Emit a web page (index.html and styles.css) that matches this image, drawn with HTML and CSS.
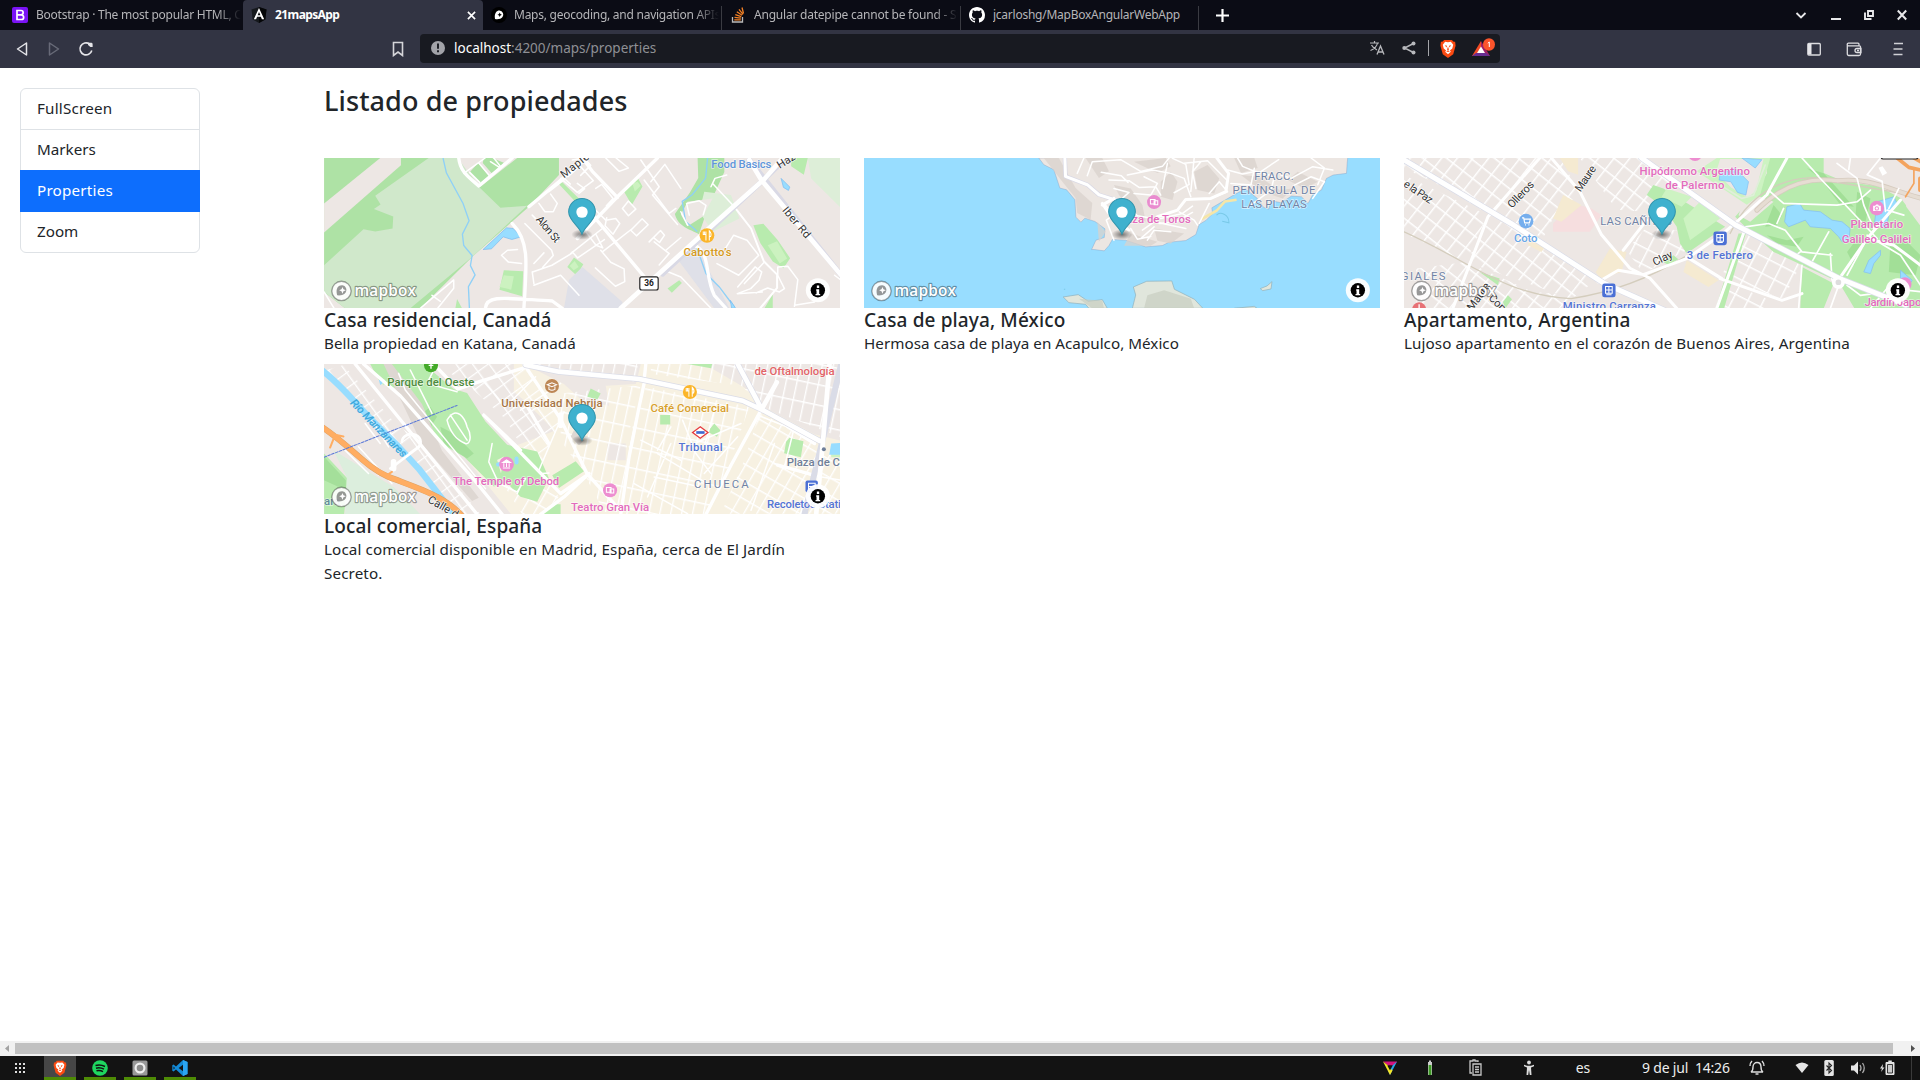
FILE: index.html
```html
<!DOCTYPE html>
<html lang="es">
<head>
<meta charset="utf-8">
<title>21mapsApp</title>
<link rel="stylesheet" href="styles.css">
</head>
<body>
<svg class="defs" width="0" height="0" aria-hidden="true">
  <defs>
    <radialGradient id="shade"><stop offset="0" stop-opacity=".5"/><stop offset="1" stop-opacity="0"/></radialGradient>
    <symbol id="overlay" viewBox="0 0 1544 449">
      <ellipse cx="772" cy="229" rx="32" ry="16" fill="url(#shade)"/>
      <path d="M772 228C764 203 732 188 732 161A40 40 0 0 1 812 161C812 188 780 203 772 228Z" fill="#3fb1ce" stroke="#3295ad" stroke-width="3"/>
      <circle cx="772" cy="162" r="17" fill="#fff"/>
      <circle cx="52" cy="398" r="29" fill="#fff" fill-opacity=".9" stroke="#000" stroke-opacity=".35" stroke-width="4"/>
      <path d="M39 411C33 388 44 380 55 381A14 14 0 0 1 65 402C60 410 50 412 39 411Z" fill="#000" fill-opacity=".4"/>
      <path d="M55 386l3 7 7 3-7 3-3 7-3-7-7-3 7-3z" fill="#fff"/>
      <text class="logo" x="91" y="412" textLength="184">mapbox</text>
      <circle cx="1478" cy="396" r="36" fill="#fff" fill-opacity=".93"/>
      <circle cx="1478" cy="396" r="21.500"/>
      <path d="M1475 382h7v7h-7zM1473 393h9v14h3v4h-14v-4h3v-10h-1z" fill="#fff"/>
    </symbol>
    <symbol id="lion" viewBox="0 0 16 20">
      <path d="M4 1h8l2 2 1.500 0 .5 4-2.500 9L8 20l-5.500-4L0 7l.5-4L2 3z" fill="#fb4a12"/>
      <path d="M8 3.500l3-.5 2.500 3-1 4-2.500 2 1 1.500L8 16l-3-2.500L6 12l-2.500-2-1-4L5 3z" fill="#fff"/>
      <path d="M4.500 6.500l2.500.5-.5 2zM11.500 6.500L9 7l.5 2zM8 8l1 3-1 1-1-1zM6 13l2-.8 2 .8-2 .6z" fill="#fb4a12"/>
    </symbol>
    <pattern id="p3" width="37" height="44" patternUnits="userSpaceOnUse" patternTransform="rotate(38)"><path d="M0 2H37M2 0V44" stroke="#fff" stroke-width="4.500"/></pattern>
    <pattern id="p3b" width="42" height="46" patternUnits="userSpaceOnUse" patternTransform="rotate(27)"><path d="M0 2H42M2 0V46" stroke="#fff" stroke-width="4.500"/></pattern>
    <pattern id="p4" width="32" height="60" patternUnits="userSpaceOnUse" patternTransform="rotate(12)"><path d="M0 2H32M2 0V60" stroke="#fff" stroke-width="4"/></pattern>
    <pattern id="p4b" width="34" height="46" patternUnits="userSpaceOnUse" patternTransform="rotate(30)"><path d="M0 2H34M2 0V46" stroke="#fff" stroke-width="4"/></pattern>
    <pattern id="p4c" width="40" height="38" patternUnits="userSpaceOnUse" patternTransform="rotate(-36)"><path d="M0 2H40M2 0V38" stroke="#fff" stroke-width="4"/></pattern>
  </defs>
</svg>

<div class="window">
  <header class="tabs">
    <div class="tab">
      <svg class="fav" viewBox="0 0 16 16"><rect width="16" height="16" rx="2" fill="#7a13f5"/><path d="M5 3.500h4a2 2 0 0 1 0 4.300H5zM5 7.800h4.300a2.300 2.300 0 0 1 0 4.700H5z" fill="none" stroke="#fff" stroke-width="1.700"/></svg>
      <span class="tab-title t1">Bootstrap · The most popular HTML, C</span>
    </div>
    <div class="tab active">
      <svg class="fav" viewBox="0 0 16 16"><path d="M8 0l7.500 2.600-1.200 10L8 16l-6.300-3.400-1.200-10z" fill="#15181c"/><path d="M8 0l7.500 2.600-1.200 10L8 16z" fill="#050608"/><path d="M8 1L2.800 12.300h2.300l1-2.500h3.800l1 2.500h2.300zM8 5l1.400 3.300H6.600z" fill="#fff" fill-rule="evenodd"/></svg>
      <span class="tab-title t2">21mapsApp</span>
      <svg class="close" viewBox="0 0 10 10"><path d="M1 1l8 8M9 1L1 9" stroke="#fff" stroke-width="1.800"/></svg>
    </div>
    <div class="tab third">
      <svg class="fav" viewBox="0 0 16 16"><circle cx="8" cy="8" r="8" fill="#000"/><path d="M4 12C3 6 6 3.500 8.500 3.600a4 4 0 0 1 3 6.400C10 12 7 12.500 4 12z" fill="#fff"/><path d="M8.700 5.500l.7 1.500 1.500.7-1.500.7-.7 1.500-.7-1.500-1.500-.7L8 7z"/></svg>
      <span class="tab-title t3">Maps, geocoding, and navigation APIs</span>
    </div>
    <div class="tab sep">
      <svg class="fav" viewBox="0 0 16 16"><path d="M2.500 10v5h10v-5" fill="none" stroke="#bcbbbb" stroke-width="1.300"/><path d="M4.300 12.800h6.500M4.500 10.300l6.400.9M5.300 7.600l6 2M6.800 4.800l5.300 3.500M9 2.300l4 5M12 .5l1.500 6" stroke="#f48024" stroke-width="1.300"/></svg>
      <span class="tab-title t4">Angular datepipe cannot be found - St</span>
    </div>
    <div class="tab sep last">
      <svg class="fav" viewBox="0 0 16 16"><path fill="#fff" d="M8 0C3.580 0 0 3.580 0 8c0 3.540 2.290 6.530 5.470 7.590.4.070.55-.17.55-.38 0-.19-.01-.82-.01-1.490-2.010.37-2.530-.49-2.690-.94-.09-.23-.48-.94-.82-1.130-.28-.15-.68-.52-.01-.53.63-.01 1.080.58 1.230.82.72 1.210 1.870.87 2.330.66.07-.52.28-.87.51-1.070-1.780-.2-3.640-.89-3.640-3.950 0-.87.31-1.590.82-2.150-.08-.2-.36-1.020.08-2.120 0 0 .67-.21 2.200.82.64-.18 1.320-.27 2-.27s1.360.09 2 .27c1.530-1.040 2.200-.82 2.200-.82.44 1.100.16 1.920.08 2.120.51.56.82 1.270.82 2.150 0 3.070-1.870 3.750-3.650 3.950.29.25.54.73.54 1.480 0 1.070-.01 1.930-.01 2.200 0 .21.15.46.55.38A8.010 8.010 0 0 0 16 8c0-4.420-3.580-8-8-8z"/></svg>
      <span class="tab-title t5">jcarloshg/MapBoxAngularWebApp</span>
    </div>
    <svg class="plus" viewBox="0 0 12 12"><path d="M6 0v12M0 6h12" stroke="#fff" stroke-width="2"/></svg>
    <div class="wm">
      <svg viewBox="0 0 12 12"><path d="M1.500 4L6 8.500 10.500 4" fill="none" stroke="#e8e8ea" stroke-width="1.800"/></svg>
      <svg viewBox="0 0 12 12"><path d="M1 10h10" stroke="#e8e8ea" stroke-width="2"/></svg>
      <svg viewBox="0 0 12 12"><path d="M5 2h5v5H5zM2 3.500V10h6.500" fill="none" stroke="#e8e8ea" stroke-width="1.900"/></svg>
      <svg viewBox="0 0 12 12"><path d="M1.800 1.500l8.400 9M10.200 1.500l-8.400 9" stroke="#e8e8ea" stroke-width="2"/></svg>
    </div>
  </header>

  <div class="toolbar">
    <div class="nav">
      <svg viewBox="0 0 16 16"><path d="M12.500 2v12L3.500 8z" fill="none" stroke="#e4e4e8" stroke-width="1.500" stroke-linejoin="round"/></svg>
      <svg viewBox="0 0 16 16"><path d="M3.500 2v12l9-6z" fill="none" stroke="#686a78" stroke-width="1.500" stroke-linejoin="round"/></svg>
      <svg viewBox="0 0 16 16"><path d="M13.800 9.500A6 6 0 1 1 11.500 3" fill="none" stroke="#e4e4e8" stroke-width="1.600"/><path d="M10 1.800h3.600l1 1V6h-2.200L10 4z" fill="#e4e4e8"/></svg>
    </div>
    <svg class="bookmark" viewBox="0 0 16 16"><path d="M3.500 1.500h9v13L8 11l-4.500 3.500z" fill="none" stroke="#d5d5d9" stroke-width="1.600"/></svg>
    <div class="address">
      <svg class="warn" viewBox="0 0 14 14"><circle cx="7" cy="7" r="7" fill="#a2a3a9"/><path d="M7 2.500v5.300M7 9.200v2" stroke="#181a21" stroke-width="1.900"/></svg>
      <span class="url"><b>localhost</b>:4200/maps/properties</span>
      <svg class="tr" viewBox="0 0 16 16"><path d="M1 3h9M5.500 1v2M8.500 3C8 6 5 9 1.500 10.500M2.500 5C4 8 6 9 8 10" fill="none" stroke="#b8b9bd" stroke-width="1.200"/><path d="M8 14.500L11.500 6 15 14.500M9.300 12h4.400" fill="none" stroke="#b8b9bd" stroke-width="1.300"/></svg>
      <svg class="share" viewBox="0 0 14 14"><path d="M11.500 2.500L2.500 7l9 4.500" fill="none" stroke="#b8b9bd" stroke-width="1.400"/><circle cx="11.500" cy="2.500" r="2" fill="#b8b9bd"/><circle cx="2.300" cy="7" r="2" fill="#b8b9bd"/><circle cx="11.500" cy="11.500" r="2" fill="#b8b9bd"/></svg>
      <i class="rule"></i>
      <svg class="brave"><use href="#lion"/></svg>
      <svg class="bat" viewBox="0 0 24 20"><path d="M9 3L0 18h4L9 10z" fill="#f04a24"/><path d="M9 3l9 15h-4L9 10z" fill="#9e1f63"/><path d="M0 18h18l-4-3H4z" fill="#662d91"/><path d="M9 8.500l4 6.500H5z" fill="#fff"/><ellipse cx="17" cy="6.500" rx="6" ry="6.200" fill="#fb542b"/><path d="M15.800 5.200l1.500-1.200v5" fill="none" stroke="#fff" stroke-width="1"/></svg>
    </div>
    <div class="actions">
      <svg viewBox="0 0 16 16"><rect x="1.800" y="2.500" width="12.500" height="11.500" rx="1" fill="none" stroke="#dcdce0" stroke-width="1.300"/><path d="M2 3h3.500v10.500H2z" fill="#e6e6ea"/></svg>
      <svg viewBox="0 0 16 16"><path d="M13 5V3.200a1 1 0 0 0-1-1H2.500a1.300 1.300 0 0 0 0 2.600H13.500a1 1 0 0 1 1 1V13a1.500 1.500 0 0 1-1.500 1.500H2.800A1.500 1.500 0 0 1 1.300 13V3.500M15 7.500h-4a2 2 0 0 0 0 4H15zM13 9.500h-2" fill="none" stroke="#dcdce0" stroke-width="1.300"/></svg>
      <svg viewBox="0 0 16 16"><path d="M4 2.500h9M3.500 8h9M3.500 13.500h9" stroke="#d0d0d5" stroke-width="1.700"/></svg>
    </div>
  </div>

  <div class="page">
    <aside>
      <ul class="menu">
        <li class="wide">FullScreen</li><li>Markers</li><li class="on wide">Properties</li><li>Zoom</li>
      </ul>
    </aside>
    <main>
      <h2>Listado de propiedades</h2>
      <div class="cards">
        <article>
          <svg class="map" viewBox="12 9 1544 449">
            <path fill="#ede7e4" d="M0 0h1600v500H0z"/>
            <path fill="#aee2a5" d="M12 9H405L480 95 590 9H715V60L625 155 455 305 300 459H75L12 410z"/>
            <path fill="#ede7e4" d="M12 145L180 9h62v22L12 232z"/>
            <path fill="#d0e8cb" d="M325 9L165 122l16 26-20 14 58 22-2 36-52 9-35-7L12 330v79l63 50H270L455 305 620 152l-80 6-65-63L412 9z"/>
            <path fill="#ede7e4" d="M415 9H575L478 92z"/>
            <path fill="#aee2a5" d="M448 52l25-28 32 40-26 22zM490 9h25l35 14-35 33-28-32z"/>
            <path fill="#b8ebae" d="M550 345l58 3-3 75-68-20zM718 75l70 68-7 15-65-70zM910 110l42-40 13 24-32 56zM740 335l20-28 28 20-20 34zM1297 210l30-4 42 48 38 55-20 30-32-20-37-55zM1410 9h50l-12 50-38-25zM1040 400l35-25 8 8-30 29zM1330 459l25-42v42zM405 459l5-28 15 28z"/>
            <path fill="#ccf2c0" d="M550 360l30 3-8 40-35-8zM935 85l15-5 10 12-18 17zM1340 270l28-12 30 52-22 15zM747 332l15-15 12 18-15 10z"/>
            <path fill="#aee2a5" d="M1130 9h80v42l-50 110-26 76c-25-13-63-22-72-60l45-65 25-43z"/>
            <path fill="#ddeed8" d="M1460 9h100v150L1470 70zM1150 110l80 10 25 70-80 40-40-60z"/>
            <path fill="#dfe0e8" d="M785 335l120 105v19H730l15-85zM1065 305l60-38 35 70 65 122h-45z"/>
            <path fill="#ede7e4" d="M1100 140l75-10-30 55-45 28-20-35z"/>
            <g fill="none" stroke="#8fd0f7" stroke-width="4"><path d="M368 9l10 44 50 92 18 52-20 40 4 34 25 30-5 30 14 28-20 35 3 65M1125 270l30 85 40 40 45 60M1160 9l-6 60-40 50-30 20 10 60 35 30"/></g>
            <path fill="#98ddff" stroke="#79b9ee" stroke-width="2" d="M488 283l70-65 20 2 24 25-28 8-26-8-35 36zM1380 70l26 26-4 10-15-9zM1228 435l16 24h-12z"/>
            <g fill="none" stroke="#fff" stroke-linejoin="round" stroke-linecap="round" stroke-width="4.500">
              <path d="M430 55l64-46M448 52l30 30M475 24l34 40M510 20l28 18M520 9l20 25M12 410l30 49M300 459l100-85v25l-48 60M335 420l25 18M685 110l48-38 16 15M655 145l18 25h25l12-25-20-28M613 205l80 80 5 16-32 36M635 180l75 78M640 325l30-32M603 325l-40-5-20-20 18-15 30-2M636 350l58-20 60-36M640 385l-5-35M640 390l80-30 55 60M720 70l50 42 48-35-40-44-36 32M855 9l40 40 28-10-37-30M755 15l35-6 20 22-30 30M770 85l22 16-17 14M825 100l18-12 34 42-20 22M750 295l95-75M780 210l46 60 20 8-20-40M755 290l16 18 80-55M845 290l90-70M840 285l30 36 40 20 2 38-28 14-60-55M820 160l35 35 30-5 12 15-20 32-24-25 5-24M905 160l18-22 22 24-22 20zM930 225l34-34 18 18-35 33zM985 260l34-34 12 14-15 22-16-13M960 15l55 80-20 25 75 88M990 80l42-52 48 72M970 75l75 100 20-15M1000 260l45 35-30 34M1035 285l45-38M1170 95l12-25 35-10M1175 85l65 70M1105 180l-8-35 38-8 20 14-8 28M1080 170l20 40M1030 345l50 20 90 94M1210 285l28-45 40 15 35 45-60 60-65-35M1250 395l52-60 20 15-8 25-25 25-40 15 75-5M1330 320l-60 65M1370 360v-25l30-2 30 40-10 80M1370 360l20 40-15 10-35-12-35 15M1420 450l60-10M1540 360l20 15"/>
              <path stroke-width="6" d="M1240 155l50 65 38 98 40 40v40l-50 60"/>
              <g stroke-width="10"><path d="M415 9c5 45 35 60 60 84L575 9M625 155L800 9M575 205c50 50 45 110 35 254M495 459c2-42 60-30 200-22l30 22M785 9l30 40 75 78M1010 9L890 125 770 250M820 185L975 370M1120 270c50 20 30 90 60 150l35 39"/></g>
              <path stroke="#d9d9e5" stroke-width="16" d="M1025 356L1330 72l65-63M1285 15L1560 360"/>
              <path stroke-width="14" d="M900 459L1180 205 1330 72l55-63M1285 15l36 60L1560 360"/>
            </g>
            <g class="lbl"><text x="1171" y="38" fill="#5f96da" textLength="180">Food Basics</text><text x="1088" y="302" fill="#d59a20" textLength="144">Cabotto’s</text></g>
            <g class="road"><text transform="translate(730 70) rotate(-38)" textLength="98">Maple</text><text transform="translate(645 194) rotate(50)" textLength="92">Alon St</text><text transform="translate(1382 166) rotate(50)" textLength="112">Iber Rd</text><text transform="translate(1376 42) rotate(-32)">Haz</text></g>
            <circle cx="1158" cy="241" r="22" fill="#fbb529"/><path d="M1151 229v9M1155 229v27M1147 229v9h8M1165 256v-29q8 8 4 17h-4" fill="none" stroke="#fff" stroke-width="3"/>
            <rect x="957" y="365" width="55" height="39" rx="6" fill="#fff" stroke="#222" stroke-width="3.500"/><text class="num" x="970" y="393" textLength="29">36</text>
            <use href="#overlay" x="12" y="9" width="1544" height="449"/>
          </svg>
          <h5 class="h1">Casa residencial, Canadá</h5><p class="d1">Bella propiedad en Katana, Canadá</p>
        </article>
        <article>
          <svg class="map" viewBox="12 9 1544 449">
            <path fill="#98ddff" d="M0 0h1600v500H0z"/>
            <path fill="#ece6e2" stroke="#7d91b8" stroke-opacity=".5" stroke-width="2" d="M535 9l15 20 30 15 18 55 20 5 25 30 3 52 15 15 12-12 30 10 30 22-2 26-25 8-13 28 8 0 30 4 14-16 10-18 40 2 60 20 50-4 20-10 50-5 30-18 10-30 20-12 20-20-2-18 60-35 40-22 35 28 20 28 15 5 8-25 30 6 30-20 30 2 20 20 15-28 25-12 15-35 20-10 40-5 2-30 5-50z"/>
            <g fill="#d9d2cc" opacity=".75"><path d="M550 9h45l50 90 50 45-5 50-40-20-5-45-40-50zM675 9h50l20 40-30 20zM820 20l95-11 15 25-40 20zM900 80l30-30 20 30-15 55-35-10zM1000 50l40-20 35 40-15 45-50-10zM1140 60l55 5 60 40 40-5-30 30-60-20zM760 90l50 10 35 50 10 50-30-20-50-60zM710 200l25 30-20 30zM810 235l80 25-20 12-80 0zM880 220l90 15-40 30-40-8zM1310 50l60 30-40 20-50-25zM1120 9h60l10 30-50 15z"/></g>
            <path d="M1022 192l45-25 25-28 35-5" fill="none" stroke="#f5e6a8" stroke-width="8"/>
            <path fill="#e0e6dc" stroke="#8eb0ba" stroke-width="2" d="M608 425l45-7 30 20 42-5 15 26h-55l-10-12-50-5zM818 395l40-17 75-1 8 25 60 30 25 27H815l10-40zM1198 400l20-8 15-13-3 22-25 5zM1120 459l60-6 8 6z"/>
            <path fill="#c8cdc1" opacity=".7" d="M860 420l50-15 80 25 10 29H850zM655 430l70 6 5 23h-35z"/>
            <path d="M1067 180c10-12 38-3 37 23l-20-5M610 402h4" fill="none" stroke="#79c9e8" stroke-width="3"/>
            <g fill="none" stroke="#fff" stroke-width="4.500" stroke-linejoin="round" stroke-linecap="round"><path d="M650 55l20-46M680 62l15-42 85-6 60 35 65-15 20-25M745 75l60 2 30 20 50-2 15 25M722 52l60 10 20 20M800 60l75-15 55 10 40 15 20 55M760 100l45 12-25 22 50 48 60 10M850 65l40 20-20 35-50-5M905 100l15-75M935 10l40 18 10 60-45 25M1000 9l-10 100M970 25l70-8 60 60M1005 100l-10-50 25-30M1050 130l50-20-25-30-30 35M1130 9l15 25 48 20 60-40M1100 45l45 12 40-8M1110 85l60 5 10-50M1190 50l50 15-10 40-60 45M1260 60l30 10 65-35 60 10M1300 90l50-25 40 15-35 50M1350 9l40 30-20 50M900 190l65-15 30-22M895 205l50-5 50-28M955 170l45 25 10 15M1045 145l-30 60M840 250l40-35M860 255l20-30 50 5M765 175l-28 20 23 60M810 220l20 32 40-8M845 225l35-25 95 20M735 150l25 35"/>
            <path stroke="#d8d8e5" stroke-width="13" d="M613 9l2 55 65 25 35 30 63 20"/><path stroke-width="9" d="M613 9l2 55 65 25 35 30 63 20M725 150l35-20M890 185l60-20 25-32 75-3 45-20 8-55-35-46M725 145l30 45 50 35"/></g>
            <circle cx="880" cy="141" r="21" fill="#e98bcf"/><path d="M869 133h14v14h-14zM880 137h11v12h-11z" fill="#e98bcf" stroke="#fff" stroke-width="3"/>
            <g class="lbl"><text x="796" y="203" fill="#e36bbd" textLength="194">aza de Toros</text></g>
            <g class="area"><text x="1180" y="76" textLength="118">FRACC.</text><text x="1115" y="117" textLength="248">PENÍNSULA DE</text><text x="1141" y="159" textLength="196">LAS PLAYAS</text></g>
            <use href="#overlay" x="12" y="9" width="1544" height="449"/>
          </svg>
          <h5 class="h2">Casa de playa, México</h5><p class="d2">Hermosa casa de playa en Acapulco, México</p>
        </article>
        <article>
          <svg class="map" viewBox="24 9 1544 449">
            <path fill="#ede7e4" d="M0 0h1600v500H0z"/>
            <path fill="url(#p3)" d="M24 9h406L280 180 150 100 24 40zM24 60l250 120-65 140L24 235zM430 9h60l60 105-80 75-30 60-160-80zM550 9h200l80 60-90 100-80-5zM285 185l170 85 150 100-80 60-315-110zM60 340l150-20 200 90 130 10-50 39H60z"/>
            <path fill="url(#p3b)" d="M1040 230l170 100-50 100-190-60zM990 380l130 55-10 24H960zM690 285l60-70 90 10 30 60-130 70z"/>
            <path fill="#f6dedf" d="M470 205l60-60 55 15 30 20-35 50-110 0z"/>
            <path fill="#f5ead1" d="M640 280l50 10-15 60-65 20-12-20zM870 315l95 60-30 20-75-45zM500 120l55 30-60 50-25-10zM490 9h55v50l-30-10zM400 230l50 40-15 20-40-20z"/>
            <path fill="#b8ebae" d="M770 90l30 10 185 115-115 80-20-30-10-50-40-60-50-35zM1110 9h170l230 120 62 80v250h-200L1325 380 1130 290l-85-75-30-30 60-70 35-60zM1215 335l95 50-30 74h-70zM1025 235l22 0-65 224h-25zM800 320l30-20 15 12-30 17zM250 350l60 20-5 20zM320 440l15-20 12 12-20 27z"/>
            <path fill="#ede7e4" d="M1280 9h220l20 80-70 5-110-15-60-25zM1050 110l80 30-70 60-35-20zM1520 100l52 35v80l-45-60z"/>
            <g fill="#a2df97"><path d="M1110 240l60 15 50-10-20 30-60-10zM1130 150l25 30-15 30-35 5zM1230 40l40 30 60 80 40 5-90-100zM1350 290l30-40 20 20-30 60zM1480 260l30-20 60 60-15 60-80-10zM1380 110l40 20-15 70-30-10z"/></g>
            <g fill="#cdf3c2"><path d="M810 100l75 25-30 30-60-30zM860 190l50-50 60 50-90 65z"/><path d="M960 9h160l-30 110-40 30-90-60-60-40z"/></g>
            <path fill="#ede7e4" d="M970 12h130l-22 95-25 20-50-30-45-45z"/>
            <path fill="#98ddff" stroke="#82bdf0" stroke-width="2" d="M970 55l45-15 40 40-8 40-25-8-20-32-35-5zM1035 9l60 5-20 25zM1170 155l38-10 12 20 50 5 35 25 30 5 24 20-4 40-20 0-10-15-25-25-60-5-15-20-50 20-12-15zM1440 140l50-15 12 25-25 20-10 50-35-15zM1400 350l15-35 35-30 0 15-20 25-10 30zM1510 345l35 30-10 15-25-15z"/>
            <g fill="none" stroke="#fff" stroke-linecap="round" stroke-linejoin="round">
              <path stroke="#d4cdbd" stroke-width="4" d="M24 230c200 90 300 190 500 200 130-20 250-70 340-125M1000 235c70-150 220-190 310-155l235 40"/>
              <path stroke="#d6cbbf" stroke-width="15" d="M1080 165c70-70 150-100 240-88 100-10 150 25 250 52"/>
              <path stroke="#e6ddd3" stroke-width="10" d="M1080 165c70-70 150-100 240-88 100-10 150 25 250 52"/>
              <path stroke-width="5" d="M1045 215l70-10 50 20 50 65 90 10M1120 110l40 35 160 5 60-10 40-35M1140 205l20-45M1210 290l-20 15M1245 320l50-90M1305 375l-5-80M1350 390l40 30 40-5M1410 240l100 60 60 90M1410 250l-60 110M1320 25l60 45 20 80 30 70M1360 9l-5 35M1450 9l-40 50 45 20 10 90M1260 60l180 190M1505 100l-30 60M1520 180l-50-15M1215 9l50 55M1325 390l-25 69M1420 459l50-60 100 10M1215 330l-10 129"/>
              <path stroke="#e0eeda" stroke-width="5" d="M955 80l80 50 35-10 35-90"/>
              <g stroke-width="9"><path d="M430 9L275 185 170 459M465 9l85 100 65 130 85 100 60 30 80 90M750 195l-70 90M1170 9l-60 110-95 85-35 30L870 310 740 358 665 345l-60 35M1040 235L960 459M970 370l185 65 60-20M870 305l105 65M1410 250l-90 130M1510 135l-100 115M1570 330l-80-60-80-20"/></g>
              <path stroke="#d9dce8" stroke-width="19" d="M24 15l320 190 280 180 180 80M735 9l280 200 310 160 200 80"/>
              <path stroke-width="15" d="M24 15l320 190 280 180 180 80M735 9l280 200 310 160 200 80"/>
              <circle cx="1324" cy="381" r="14" stroke-width="11" fill="#ddd"/>
              <path stroke="#f4a45e" stroke-width="11" d="M1500 9l35 28 35 8M1550 9l22 12M1568 70v35"/><path stroke="#f4a45e" stroke-width="5" d="M1550 45v40l-25 40"/>
            </g>
            <rect x="1452" y="-20" width="110" height="32" rx="6" fill="#fff" stroke="#222" stroke-width="3.500"/>
            <path fill="#fff" d="M1444 38l12-4 14 20-14 8z"/>
            <g class="lbl">
              <g fill="#e36bbd"><text x="729" y="59" textLength="330">Hipódromo Argentino</text><text x="806" y="101" textLength="177">de Palermo</text><text x="1360" y="219" textLength="158">Planetario</text><text x="1334" y="262" textLength="208">Galileo Galilei</text><text x="1402" y="451" textLength="222">Jardín Japonés</text></g>
              <g fill="#5474d4"><text x="870" y="312" textLength="198">3 de Febrero</text><text x="499" y="464" textLength="279">Ministro Carranza</text></g>
              <text x="353" y="260" fill="#68a7e8" textLength="70">Coto</text>
            </g>
            <g class="area"><text x="611" y="209" textLength="214">LAS CAÑITAS</text><text x="14" y="375" textLength="134">GIALES</text></g>
            <g class="road"><text transform="translate(20 92) rotate(34)" textLength="98">e la Paz</text><text transform="translate(347 161) rotate(-46)" textLength="98">Olleros</text><text transform="translate(552 112) rotate(-56)" textLength="86">Maure</text><text transform="translate(774 332) rotate(-25)" textLength="62">Clay</text><text transform="translate(228 468) rotate(-54)">Maure</text><text transform="translate(275 430) rotate(44)">Conde</text></g>
            <circle cx="389" cy="198" r="22" fill="#75aeed"/><path d="M377 188h5l3 15h14l3-11h-19M386 209h3M396 209h3" fill="none" stroke="#fff" stroke-width="3.500"/>
            <circle cx="1439" cy="159" r="22" fill="#ed8dd0"/><path d="M1428 152h6l3-4h6l2 4h6v16h-23z" fill="#fff"/><circle cx="1439" cy="160" r="5" fill="none" stroke="#ed8dd0" stroke-width="3"/>
            <circle cx="895" cy="-3" r="21" fill="#ed8dd0"/><circle cx="1523" cy="386" r="20" fill="#ed8dd0"/><circle cx="69" cy="462" r="21" fill="#e77175"/><path d="M69 447v12" stroke="#fff" stroke-width="4"/>
            <g id="station"><rect x="950" y="229" width="40" height="41" rx="7" fill="#4b70d5"/><path d="M960 238h20v20h-20zM960 248h20M970 238v20M962 262h16" stroke="#fff" stroke-width="3" fill="none"/></g><use href="#station" x="-333" y="156"/>
            <use href="#overlay" x="24" y="9" width="1544" height="449"/>
          </svg>
          <h5 class="h3">Apartamento, Argentina</h5><p class="d3">Lujoso apartamento en el corazón de Buenos Aires, Argentina</p>
        </article>
        <article>
          <svg class="map" viewBox="12 12 1544 449">
            <path fill="#f7f1e2" d="M0 0h1600v500H0z"/>
            <path fill="#ede7e4" d="M12 12h470l130 110 90 90-130 50-250-110 250 310H12zM610 12H960l-15 60-90 5 10 60-80-15-55-50zM1150 12h410v230l-80-20-150-80-60-60zM180 12h400v80l-120 20-200-80zM860 250h55v50h-55z"/>
            <path fill="url(#p4)" d="M720 100l240-25-40 160-10 220h-60l-60-115-70-100zM990 12h570v220l-220-85-80-70-270-35zM975 80l310 60-85 240-50 82H915l10-230zM640 12h310v55l-240-35z"/>
            <path fill="url(#p4b)" d="M1315 160l245 110v190h-360l70-160zM560 300l95 30 60 80-50 52h-60l-60-95z"/>
            <path fill="url(#p4c)" d="M380 12h220l90 110 30 60-65 145-50-65-50-85-110-100-60-40zM20 30l50-15 160 180 60 40 190 227h-60L160 180z"/>
            <path fill="#b8ebae" d="M150 12h160l90 75 40 12 55 85 65 70 90 20 35 80-35 70-50-15-60-60 10-60-20 10 20 70-30 10-90-90-70-40-60-70-15-55-40-30-70-35zM695 345l70-42 25 30-75 50zM12 280l70 75-10 107H12zM800 110l10-25 30 15-10 18zM1160 215l20-25 18 20-10 20zM1395 245l10-12 42 10-8 48-50-12zM1018 165h30v28h-30zM660 462l40-30 20 0v30zM1100 12l75-5-5 18z"/>
            <path fill="#dceedd" d="M40 270l180 110 80 82H75l5-110z"/>
            <path fill="#a4df9a" d="M12 290l65 70v30l-65-30zM295 170l35-30 20 30-25 40zM360 200l40 20 60 60-20 15-70-45z"/>
            <path fill="#ded7d2" d="M190 12h25l90 120 60 140 110 140-20 10-150-170zM760 210l30 30-15 15-25-25z"/>
            <path fill="#ccf2c0" d="M185 62l8-5 4 14-9 5zM1530 255l30-6v42h-30z"/>
            <path fill="#98ddff" d="M176 60l8-4 3 14-7 5zM1530 250l30-2v36h-36z"/>
            <g fill="none" stroke="#fff" stroke-linecap="round" stroke-linejoin="round">
              <path stroke="#98ddff" stroke-width="19" stroke-linecap="butt" d="M5 30c65 50 100 100 150 150l80 80 60 65 105 135"/>
              <path stroke="#98ddff" stroke-width="12" d="M545 310l-12 3M588 295v12"/>
              <g stroke-width="4.500"><path d="M350 12L320 70l90 25M270 30l65 130M235 40l20 50 240 295M380 180c30-50 55 0 60 20 15 25 10 55-5 50-25-10-45-30-55-70M390 165l50 75M515 250l-10 55 30 65 55 25 25-40M590 400l20-45M655 330l75-175M665 340l20-2M490 65l65 75 90-90M600 150l120-80M155 180l50 80M135 190l45 60M115 260l100 110M95 265l80 80M75 270l70 70M1085 180l40 100 45 60M1120 250l140-60M1010 280l150 90M1000 350l140 30M940 370l160 90M960 240l120 60M1050 200l-40 70M980 410l70-160M1180 150l-30 110M1250 230l-100 110M1360 310l110 35 90 15M1360 250l-70 200M1420 200l-30 120M1500 250l-50 200M1310 165l100 40"/></g>
              <path stroke-width="10" d="M105 12l130 160L470 462M130 12l110 95 70 80 150 170 85 105M340 12l72 75 65-22L615 22 655 12M490 165l230 235 85-60M610 12l110 165 80 165 100 110M615 130l70 120M600 270L490 165M805 340l-75 70-70 52M1320 150l-90 165-75 147M970 70l-15 70-30 150-25 172M970 60l5-48M1480 250l-80-50M1480 345l-110-30M1480 345l-40 117"/>
              <path stroke="#dadce7" stroke-width="18" d="M615 15l100 20 240 22 310 65 60 28 170 92M1250 12l72 135M1560 12l-60 245-50 205"/><path stroke-width="14" d="M615 15l100 20 240 22 310 65 60 28 170 92M1250 12l72 135 45-80M1525 12l-20 235-20 215"/>
              <path stroke-width="8" d="M245 245a28 24 0 1 1 45 20l-80 60"/><path stroke="#fff" stroke-width="17" d="M220 305v20M720 165v30"/>
              <path stroke="#dda266" stroke-width="18" stroke-linecap="butt" d="M5 200c90 60 130 120 200 150 90 35 180 60 230 130"/><path stroke="#ffad62" stroke-width="15" stroke-linecap="butt" d="M5 200c90 60 130 120 200 150 90 35 180 60 230 130"/><path stroke="#ffad62" stroke-width="6" d="M30 262l15-38 25 5M200 345l15-10"/>
              <path stroke="#5a78d8" stroke-width="3" stroke-dasharray="8 4" d="M12 291L410 136"/>
            </g>
            <g class="lbl">
              <text x="201" y="77" fill="#4f8b3f" textLength="261">Parque del Oeste</text><text x="542" y="140" fill="#a77545" textLength="304">Universidad Nebrija</text><text x="989" y="157" fill="#d8a02c" textLength="235">Café Comercial</text><text x="1300" y="45" fill="#e26367" textLength="240">de Oftalmología</text>
              <g fill="#e36bbd"><text x="398" y="373" textLength="318">The Temple of Debod</text><text x="751" y="451" textLength="234">Teatro Gran Vía</text></g>
              <g fill="#5474d4"><text x="1073" y="272" textLength="132">Tribunal</text><text x="1338" y="444" textLength="258">Recoletos Station</text></g>
              <text x="1397" y="316" fill="#6f7f99" textLength="224">Plaza de Colón</text><text x="12" y="435" fill="#5f8c9c">ara</text>
              <text transform="translate(88 130) rotate(46)" fill="#3fa8dc" class="river" textLength="228">Río Manzanares</text>
            </g>
            <g class="area"><text x="1119" y="383" textLength="164">CHUECA</text></g>
            <g class="road"><text transform="translate(320 424) rotate(30)">Calle de</text></g>
            <circle cx="332" cy="16" r="21" fill="#43aa28"/><path d="M332 12v14M325 16h14" stroke="#fff" stroke-width="4"/>
            <circle cx="694" cy="78" r="21" fill="#bd8755"/><path d="M680 74l14-6 14 6-14 6zM685 79v9q9 5 18 0v-9" fill="none" stroke="#fff" stroke-width="3"/>
            <circle cx="1107" cy="96" r="21" fill="#fbb529"/><path d="M1100 84v9M1104 84v26M1096 84v9h8M1114 110V82q8 8 4 17h-4" fill="none" stroke="#fff" stroke-width="3"/>
            <circle cx="558" cy="312" r="22" fill="#ed8dd0"/><path d="M546 307l12-8 12 8zM547 323h22M550 309v11M558 309v11M566 309v11" fill="#fff" stroke="#fff" stroke-width="3"/>
            <circle cx="868" cy="390" r="21" fill="#ed8dd0"/><path d="M857 382h14v14h-14zM868 386h11v12h-11z" fill="#ed8dd0" stroke="#fff" stroke-width="3"/>
            <path d="M1115 217l23-17 23 17-23 17z" fill="#fff" stroke="#e53b3e" stroke-width="4"/><path d="M1126 213h25v8h-25z" fill="#4169d0"/>
            <circle cx="1508" cy="267" r="6" fill="#6f7f99"/><rect x="1453" y="361" width="37" height="36" rx="6" fill="#4b70d5"/><path d="M1462 369h20v20h-20zM1462 379h20" fill="none" stroke="#fff" stroke-width="3"/>
            <use href="#overlay" x="12" y="12" width="1544" height="449"/>
          </svg>
          <h5 class="h4">Local comercial, España</h5><p class="d4">Local comercial disponible en Madrid, España, cerca de El Jardín Secreto.</p>
        </article>
      </div>
    </main>
  </div>

  <div class="scrollbar">
    <svg viewBox="0 0 15 15"><path d="M9 4v7L5 7.500z" fill="#a3a3a3"/></svg><i></i><svg class="end" viewBox="0 0 15 15"><path d="M6 4v7l4-3.500z" fill="#505050"/></svg>
  </div>
  <footer class="taskbar">
    <div class="apps">
      <div class="grid"><svg viewBox="0 0 10 10"><path d="M0 1h2M4 1h2M8 1h2M0 5h2M4 5h2M8 5h2M0 9h2M4 9h2M8 9h2" stroke="#ddd" stroke-width="2"/></svg></div>
      <div class="app current"><svg><use href="#lion"/></svg></div>
      <div class="app"><svg viewBox="0 0 16 16"><circle cx="8" cy="8" r="7.800" fill="#1ed760"/><path d="M3.500 5.500q5-1.300 9.500 1M4 8.200q4-1.200 8 1M4.500 10.800q3.500-.9 6.500.8" fill="none" stroke="#111" stroke-width="1.500"/></svg></div>
      <div class="app"><svg viewBox="0 0 16 16"><rect x=".5" y=".5" width="15" height="15" rx="1.500" fill="#999"/><circle cx="8" cy="8" r="5.500" fill="#eee"/><circle cx="8" cy="8" r="3.300" fill="#8a8a8a"/></svg></div>
      <div class="app"><svg viewBox="0 0 16 16"><path d="M11 0L4 6.500 1.500 4.500.3 5.200v5.600l1.200.7L4 9.500 11 16l4.500-2V2zM1.500 6.500L3 8 1.500 9.500zM11 4.800v6.400L6.700 8z" fill="#138ad7" fill-rule="evenodd"/><path d="M11 0l4.500 2v12L11 16z" fill="#2ba5f2"/></svg></div>
    </div>
    <div class="tray">
      <svg viewBox="0 0 18 18"><path d="M2 2.500h14l-2.500 4H7z" fill="#d4127d"/><path d="M16 2.500L9 16l-2-4.500 4.500-5z" fill="#26a7e8"/><path d="M2 2.500L9 16l2.500-4.500L6.500 6z" fill="#f5e528"/><path d="M6.300 6.500h5.400L9 11.500z" fill="#131313"/></svg>
      <svg class="a2" viewBox="0 0 18 18"><path d="M7 3h1V1.500h2V3h1v13H7z" fill="#ccc"/><path d="M7.600 6h2.800v10H7.600z" fill="#3d9b24"/></svg>
      <svg class="a3" viewBox="0 0 18 18"><path d="M12 3V2H9V1H7v1H4v12h2M7 5h8v11H7zM9 8h4M9 10.500h4M9 13h4" fill="none" stroke="#c9c9c9" stroke-width="1.300"/></svg>
      <svg class="a4" viewBox="0 0 18 18"><circle cx="9" cy="3.500" r="1.900" fill="#ddd"/><path d="M4 5.700l3 1h4l3-1v1.500l-3 1.300.5 7.500h-1.700L9 11l-.8 5H6.500L7 8.500 4 7.200z" fill="#ddd"/></svg>
      <span class="lang">es</span><span class="clock">9 de jul&nbsp; 14:26</span>
      <svg class="a7" viewBox="0 0 18 18"><path d="M3 13q2-1 2-5c0-6 8-6 8 0q0 4 2 5zM7.500 15h3M2 7q0-3 2-5M16 7q0-3-2-5" fill="none" stroke="#ddd" stroke-width="1.400"/></svg>
      <svg class="a8" viewBox="0 0 18 18"><path d="M2.500 6q6.500-5 13 0L9 14z" fill="#e5e5e5"/></svg>
      <svg class="a9" viewBox="0 0 18 18"><rect x="4.300" y="1" width="9.500" height="16" rx="1.500" fill="#e5e5e5"/><path d="M6.500 6.500l5 5L9 14V4l2.500 2.500-5 5" fill="none" stroke="#222" stroke-width="1.100"/></svg>
      <svg class="a10" viewBox="0 0 18 18"><path d="M2 6.500h3l4-4v13l-4-4H2z" fill="#e5e5e5"/><path d="M11 6q2 3 0 6M13.500 4q3.500 5 0 10" fill="none" stroke="#aaa" stroke-width="1.300"/></svg>
      <svg class="a10" viewBox="0 0 18 18"><path d="M8 3.500h8v12H8z" fill="#e5e5e5" stroke="#e5e5e5"/><path d="M10.300 1.500h3.500v2h-3.500z" fill="#e5e5e5"/><path d="M9.500 5.500h5v8.500h-5z" fill="#ccc" stroke="#131313" stroke-width=".8"/><path d="M5 5L2 9.500h2L3 13l3.500-4.500h-2z" fill="#ddd"/></svg>
      <i></i>
    </div>
  </footer>
</div>
</body>
</html>
```
FILE: styles.css
```css
* { box-sizing: border-box; }
body { margin: 0; background: #fff; color: #212529; font-family: "Noto Sans", "Open Sans", sans-serif; font-size: 15.2px; }
svg { display: block; flex: none; }
.defs { position: absolute; }
.window { width: 1920px; height: 1080px; display: flex; flex-direction: column; overflow: hidden; }

.tabs { height: 30px; background: #0b0c15; display: flex; align-items: center; flex: none; }
.tab { width: 239px; height: 30px; padding: 0 2px 0 8px; display: flex; align-items: center; gap: 8px; color: #b5b5b8; font-size: 12px; overflow: hidden; }
.tab:first-child { width: 243px; padding-left: 12px; }
.tab.active { width: 240px; background: #323443; color: #fff; font-weight: 700; border-radius: 4px 4px 0 0; padding-right: 7px; }
.tab.third { width: 238px; gap: 7px; }
.fav { width: 16px; height: 16px; }
.tab-title { flex: 1; overflow: hidden; white-space: nowrap; line-height: 18px; margin-top: -1px; mask-image: linear-gradient(90deg, #000 calc(100% - 24px), transparent); }
.tab.active .tab-title, .last .tab-title { mask-image: none; }
.tab.sep { border-left: 1px solid transparent; border-image: linear-gradient(#0b0c15 7px, #3a3b42 7px) 1; }
.close { width: 9px; height: 9px; }
.plus { width: 13px; height: 13px; margin-left: 17px; }
.tab.last { border-right: 1px solid #3a3b42; }
.wm { margin-left: auto; display: flex; gap: 21px; padding-right: 12px; }
.wm svg { width: 12px; height: 12px; }
.wm svg:first-child { margin-right: 2px; }
.t1, .t3, .t4, .t5 { letter-spacing: -.25px; }
.t2 { letter-spacing: -.6px; }
.t4 { letter-spacing: -.22px; }

.toolbar { height: 38px; background: #323443; display: flex; align-items: center; flex: none; padding-bottom: 1px; }
.nav { display: flex; gap: 16px; padding-left: 14px; }
.nav svg { width: 16px; height: 16px; }
.bookmark { width: 16px; height: 16px; margin-left: 296px; }
.address { width: 1080px; height: 29px; margin: 0 0 1px 14px; background: #181a21; border-radius: 4px; display: flex; align-items: center; padding: 0 4px 0 11px; }
.warn { width: 14px; height: 14px; }
.url { margin-left: 9px; flex: 1; color: #8f9095; font-size: 13.500px; }
.url b { color: #fff; font-weight: 400; }
.tr { width: 16px; height: 16px; margin-right: 17px; }
.share { width: 14px; height: 14px; margin-right: 12px; }
.rule { width: 1px; height: 16px; background: #a5a6aa; margin-right: 11px; }
.brave { width: 16px; height: 19px; margin-right: 16px; }
.bat { width: 24px; height: 20px; }
.actions { margin-left: auto; display: flex; gap: 24px; padding-right: 14px; }
.actions svg { width: 16px; height: 16px; }
.actions svg:last-child { margin-left: 4px; }

.page { flex: 1; display: flex; gap: 124px; padding-left: 20px; overflow: hidden; }
aside { width: 180px; padding-top: 20px; flex: none; }
.menu { list-style: none; margin: 0; padding: 0; border: 1px solid #dee2e6; border-radius: 6px; }
.menu li { height: 41px; line-height: 38px; padding: 0 16px; border-bottom: 1px solid #dee2e6; }
.menu li:last-child { border: 0; height: 40px; }
.menu .wide { letter-spacing: .22px; }
.menu .on { background: #0d6efd; color: #fff; height: 42px; line-height: 40px; margin: -1px -1px 0; padding-left: 17px; border-color: #0d6efd; }
main { flex: none; width: 1596px; padding-top: 16px; }
h2 { margin: 0; height: 74px; font-size: 27px; line-height: 34px; font-weight: 500; letter-spacing: .1px; }
.cards { display: grid; grid-template-columns: repeat(3, 516px); gap: 8px 24px; }
.map { width: 516px; height: 150px; }
h5 { margin: 0; font-size: 19px; line-height: 24px; font-weight: 500; letter-spacing: .13px; }
h5.h3 { letter-spacing: .25px; }
p { margin: -1px 0 0; padding-bottom: 1px; line-height: 24px; letter-spacing: .06px; }
.d2 { letter-spacing: .03px; }
.d3 { letter-spacing: .09px; }
.d4 { letter-spacing: .12px; }
text { font-family: Roboto, sans-serif; }
.lbl text { font-size: 34px; font-weight: 500; paint-order: stroke; stroke: #fff; stroke-opacity: .6; stroke-width: 4px; }
.lbl .river { stroke: none; font-style: italic; }
.area text { font-size: 34px; fill: #7183a5; paint-order: stroke; stroke: #fff; stroke-opacity: .6; stroke-width: 4px; }
.road text { font-size: 33px; fill: #333; paint-order: stroke; stroke: #fff; stroke-opacity: .8; stroke-width: 4px; }
.num { font-size: 25px; font-weight: 700; fill: #222; }
.logo { font: 600 46px "Open Sans", sans-serif; fill: #fff; paint-order: stroke; stroke: #000; stroke-opacity: .35; stroke-width: 7px; stroke-linejoin: round; }

.scrollbar { height: 15px; flex: none; background: #f1f1f1; display: flex; align-items: center; }
.scrollbar svg { width: 15px; height: 15px; }
.scrollbar i { width: 1878px; height: 11px; background: #c1c1c1; }
.scrollbar .end { margin-left: auto; }
.taskbar { height: 24px; flex: none; background: #131313; display: flex; justify-content: space-between; color: #eee; }
.apps { display: flex; gap: 8px; }
.grid { width: 36px; display: flex; align-items: center; padding-left: 15px; }
.grid svg { width: 10px; height: 10px; }
.app { width: 32px; height: 24px; border-bottom: 3px solid #4e8b05; display: flex; justify-content: center; align-items: center; padding-top: 3px; }
.app svg { width: 16px; height: 16px; }
.app.current { background: #464646; }
.tray { display: flex; align-items: center; padding-right: 8px; }
.tray svg { width: 18px; height: 18px; margin: 0 1px; }
.tray .a2 { margin-left: 21px; } .tray .a3 { margin-left: 26px; } .tray .a4 { margin-left: 35px; }
.lang { width: 20px; margin: -2px 0 0 34px; text-align: center; font-size: 14px; }
.clock { width: 90px; margin: -2px 0 0 49px; font-size: 14px; white-space: nowrap; letter-spacing: -.2px; }
.tray .a7 { margin-left: 16px; } .tray .a8 { margin-left: 26px; } .tray .a9 { margin-left: 8px; } .tray .a10 { margin-left: 10px; }
.tray i { width: 1px; height: 24px; background: #3a3a3a; margin-left: 14px; }
```
